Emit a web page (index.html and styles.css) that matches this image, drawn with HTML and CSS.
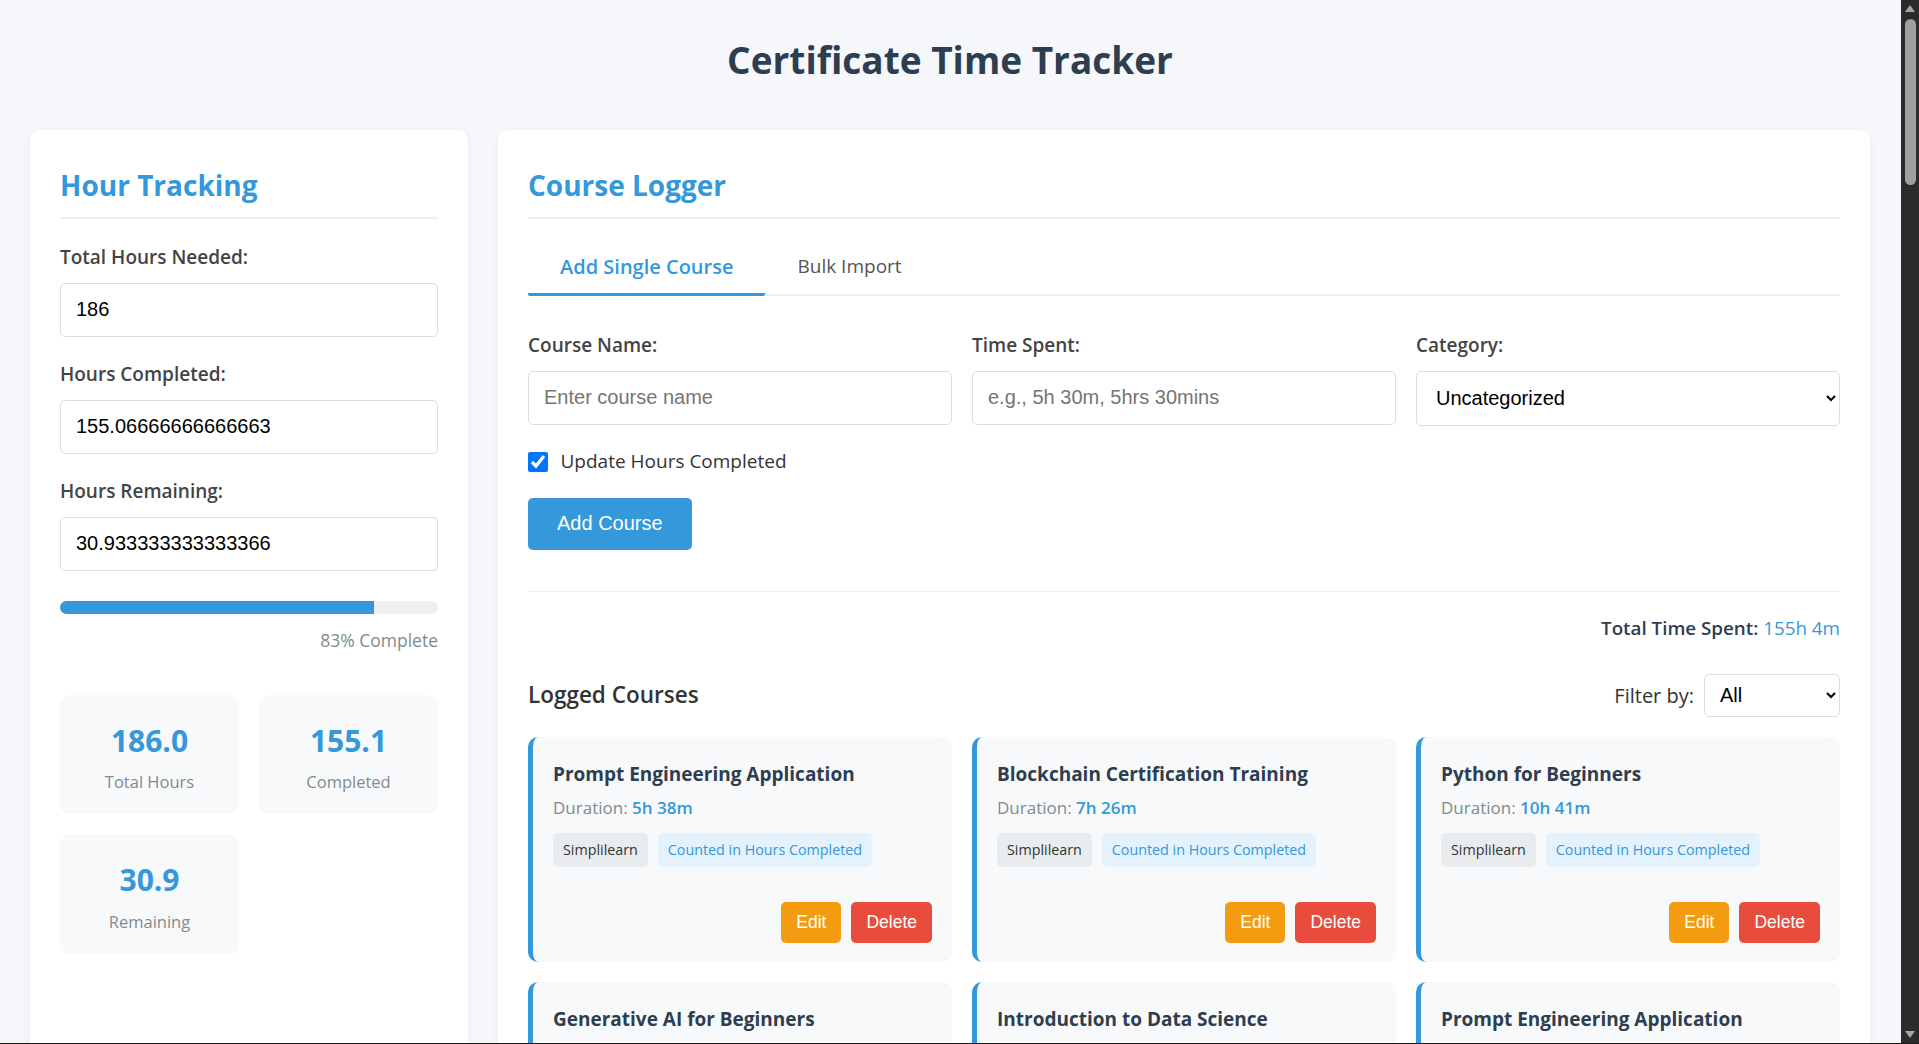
FILE: index.html
```html
<!DOCTYPE html>
<html lang="en">
<head>
<meta charset="utf-8">
<title>Certificate Time Tracker</title>
<link rel="stylesheet" href="styles.css">
</head>
<body>
<div class="viewport">
  <div class="page">
    <header class="app-header">
      <h1 class="app-title">Certificate Time Tracker</h1>
    </header>
    <main class="layout">
      <section class="panel">
        <h2 class="panel-title">Hour Tracking</h2>
        <div class="form-group">
          <label class="field-label">Total Hours Needed:</label>
          <input class="field" type="text" value="186">
        </div>
        <div class="form-group">
          <label class="field-label">Hours Completed:</label>
          <input class="field" type="text" value="155.06666666666663">
        </div>
        <div class="form-group">
          <label class="field-label">Hours Remaining:</label>
          <input class="field" type="text" value="30.933333333333366">
        </div>
        <div class="progress"><div class="progress-fill" style="width:83%"></div></div>
        <div class="progress-text">83% Complete</div>
        <div class="stats">
          <div class="stat"><div class="stat-value">186.0</div><div class="stat-label">Total Hours</div></div>
          <div class="stat"><div class="stat-value">155.1</div><div class="stat-label">Completed</div></div>
          <div class="stat"><div class="stat-value">30.9</div><div class="stat-label">Remaining</div></div>
        </div>
      </section>

      <section class="panel">
        <h2 class="panel-title">Course Logger</h2>
        <div class="tabs">
          <button class="tab active" type="button">Add Single Course</button>
          <button class="tab" type="button">Bulk Import</button>
        </div>
        <div class="form-row">
          <div class="form-col">
            <label class="field-label">Course Name:</label>
            <input class="field" type="text" placeholder="Enter course name">
          </div>
          <div class="form-col">
            <label class="field-label">Time Spent:</label>
            <input class="field" type="text" placeholder="e.g., 5h 30m, 5hrs 30mins">
          </div>
          <div class="form-col">
            <label class="field-label">Category:</label>
            <select class="field select-field"><option>Uncategorized</option></select>
          </div>
        </div>
        <label class="check-row"><input type="checkbox" checked><span>Update Hours Completed</span></label>
        <button class="btn-primary" type="button">Add Course</button>
        <hr class="divider">
        <div class="total-time"><strong>Total Time Spent:</strong> <span>155h 4m</span></div>
        <div class="list-header">
          <h3 class="list-title">Logged Courses</h3>
          <div class="filter">
            <label class="filter-label">Filter by:</label>
            <select class="filter-select"><option>All</option></select>
          </div>
        </div>
        <div class="course-grid">
          <article class="course-card">
            <h4 class="course-name">Prompt Engineering Application</h4>
            <div class="course-duration">Duration: <b>5h 38m</b></div>
            <div class="tags"><span class="tag">Simplilearn</span><span class="tag tag-counted">Counted in Hours Completed</span></div>
            <div class="card-actions"><button class="btn-sm btn-edit" type="button">Edit</button><button class="btn-sm btn-delete" type="button">Delete</button></div>
          </article>
          <article class="course-card">
            <h4 class="course-name">Blockchain Certification Training</h4>
            <div class="course-duration">Duration: <b>7h 26m</b></div>
            <div class="tags"><span class="tag">Simplilearn</span><span class="tag tag-counted">Counted in Hours Completed</span></div>
            <div class="card-actions"><button class="btn-sm btn-edit" type="button">Edit</button><button class="btn-sm btn-delete" type="button">Delete</button></div>
          </article>
          <article class="course-card">
            <h4 class="course-name">Python for Beginners</h4>
            <div class="course-duration">Duration: <b>10h 41m</b></div>
            <div class="tags"><span class="tag">Simplilearn</span><span class="tag tag-counted">Counted in Hours Completed</span></div>
            <div class="card-actions"><button class="btn-sm btn-edit" type="button">Edit</button><button class="btn-sm btn-delete" type="button">Delete</button></div>
          </article>
          <article class="course-card">
            <h4 class="course-name">Generative AI for Beginners</h4>
            <div class="course-duration">Duration: <b>3h 12m</b></div>
            <div class="tags"><span class="tag">Simplilearn</span><span class="tag tag-counted">Counted in Hours Completed</span></div>
            <div class="card-actions"><button class="btn-sm btn-edit" type="button">Edit</button><button class="btn-sm btn-delete" type="button">Delete</button></div>
          </article>
          <article class="course-card">
            <h4 class="course-name">Introduction to Data Science</h4>
            <div class="course-duration">Duration: <b>4h 5m</b></div>
            <div class="tags"><span class="tag">Simplilearn</span><span class="tag tag-counted">Counted in Hours Completed</span></div>
            <div class="card-actions"><button class="btn-sm btn-edit" type="button">Edit</button><button class="btn-sm btn-delete" type="button">Delete</button></div>
          </article>
          <article class="course-card">
            <h4 class="course-name">Prompt Engineering Application</h4>
            <div class="course-duration">Duration: <b>5h 38m</b></div>
            <div class="tags"><span class="tag">Simplilearn</span><span class="tag tag-counted">Counted in Hours Completed</span></div>
            <div class="card-actions"><button class="btn-sm btn-edit" type="button">Edit</button><button class="btn-sm btn-delete" type="button">Delete</button></div>
          </article>
        </div>
      </section>
    </main>
  </div>
  <div class="scrollbar" aria-hidden="true">
    <div class="sb-arrow"><svg width="10" height="7" viewBox="0 0 10 7"><path d="M5 0L10 7H0z" fill="#a6a6a6"/></svg></div>
    <div class="sb-track"><div class="sb-thumb"></div></div>
    <div class="sb-arrow"><svg width="10" height="7" viewBox="0 0 10 7"><path d="M0 0H10L5 7z" fill="#a6a6a6"/></svg></div>
  </div>
</div>
</body>
</html>
```

FILE: styles.css
```css
* { box-sizing: border-box; }
html, body { margin: 0; height: 100%; }
body {
  font-family: "Open Sans", "Noto Sans", sans-serif;
  background: #f5f7fa;
  color: #333;
  overflow: hidden;
}
.viewport {
  display: flex;
  height: 100vh;
  overflow: hidden;
  border-bottom: 1px solid #1c1c1c;
}
.page {
  flex: 1;
  min-width: 0;
  padding: 0 31px 0 30px;
  overflow: hidden;
}
.app-header { padding-top: 33px; margin-bottom: 43px; }
.app-title {
  margin: 0;
  text-align: center;
  font-size: 37px;
  line-height: 54px;
  font-weight: 700;
  color: #2c3e50;
}
.layout {
  display: grid;
  grid-template-columns: 438px 1fr;
  gap: 30px;
  align-items: stretch;
}
.panel {
  background: #fff;
  border-radius: 10px;
  padding: 30px;
  box-shadow: 0 2px 10px rgba(0, 0, 0, 0.05);
}
.panel-title {
  margin: 5px 0 25px;
  font-size: 28px;
  line-height: 40px;
  font-weight: 700;
  color: #3498db;
  padding-bottom: 12px;
  border-bottom: 2px solid #ecf0f1;
}
.form-group + .form-group { margin-top: 24.5px; }
.field-label {
  display: block;
  font-size: 19px;
  line-height: 27px;
  font-weight: 600;
  color: #444;
  margin-bottom: 11.5px;
}
.field {
  display: block;
  width: 100%;
  height: 54px;
  padding: 0 15px;
  border: 1px solid #ddd;
  border-radius: 5px;
  font-family: "Liberation Sans", Arial, sans-serif;
  font-size: 20px;
  color: #000;
  background: #fff;
}
.field::placeholder { color: #757575; }
.select-field { height: 55px; }
.progress {
  margin-top: 30.5px;
  height: 12.5px;
  background: #ecf0f1;
  border-radius: 7px;
  overflow: hidden;
}
.progress-fill { height: 100%; background: #3498db; }
.progress-text {
  text-align: right;
  font-size: 17.5px;
  line-height: 24px;
  color: #7f8c8d;
  margin-top: 14.7px;
}
.stats {
  display: grid;
  grid-template-columns: 1fr 1fr;
  gap: 20px;
  margin-top: 42.8px;
}
.stat {
  background: #f8f9fa;
  border-radius: 10px;
  padding: 25.9px 10px 20.2px;
  text-align: center;
}
.stat-value { font-size: 30px; line-height: 40px; font-weight: 700; color: #3498db; }
.stat-label { font-size: 16.5px; line-height: 24px; color: #7f8c8d; margin-top: 9.3px; }

.tabs { display: flex; border-bottom: 2px solid #ecf0f1; margin-top: -1px; }
.tab {
  font-family: inherit;
  font-size: 19px;
  line-height: 27px;
  padding: 9.6px 32px 13.4px;
  background: none;
  border: none;
  border-bottom: 3px solid transparent;
  margin-bottom: -2px;
  color: #555;
}
.tab.active { color: #3498db; font-size: 20px; font-weight: 600; border-bottom-color: #3498db; border-radius: 2px; }
.form-row {
  display: grid;
  grid-template-columns: repeat(3, 1fr);
  gap: 20px;
  margin-top: 36.4px;
}
.check-row {
  display: flex;
  align-items: center;
  gap: 12.5px;
  margin-top: 22.4px;
  font-size: 19px;
  line-height: 27px;
  color: #333;
}
.check-row input { width: 20px; height: 20px; margin: 0; }
.btn-primary {
  display: block;
  margin-top: 22.3px;
  height: 52px;
  padding: 0 29px;
  background: #3498db;
  color: #fff;
  border: none;
  border-radius: 5px;
  font-family: "Liberation Sans", Arial, sans-serif;
  font-size: 20px;
}
.divider { border: 0; border-top: 1px solid #ecf0f1; margin: 41px 0 0; }
.total-time { margin-top: 23.4px; text-align: right; font-size: 18.8px; line-height: 27px; }
.total-time strong { font-weight: 600; color: #2c3e50; }
.total-time span { color: #3498db; }
.list-header {
  display: flex;
  justify-content: space-between;
  align-items: center;
  margin-top: 31.6px;
}
.list-title { margin: 0; font-size: 22.5px; line-height: 30px; font-weight: 600; color: #333; }
.filter { display: flex; align-items: center; gap: 10px; font-size: 20px; color: #333; }
.filter-select {
  width: 136px;
  height: 43.4px;
  padding: 0 11px;
  border: 1px solid #ddd;
  border-radius: 5px;
  font-family: "Liberation Sans", Arial, sans-serif;
  font-size: 20px;
  color: #000;
  background: #fff;
}
.course-grid {
  display: grid;
  grid-template-columns: repeat(3, 1fr);
  gap: 20px;
  margin-top: 20.3px;
}
.course-card {
  background: #f8f9fa;
  border-left: 5px solid #3498db;
  border-radius: 10px;
  padding: 23.5px 20px 19.6px;
}
.course-name { margin: 0; font-size: 19px; line-height: 27px; font-weight: 700; color: #2c3e50; }
.course-duration { margin-top: 8.7px; font-size: 17px; line-height: 24px; color: #7f8c8d; }
.course-duration b { color: #3498db; font-weight: 600; }
.tags { display: flex; gap: 10px; margin-top: 12.8px; }
.tag {
  font-size: 14.3px;
  line-height: 20px;
  padding: 6.85px 10px;
  border-radius: 5px;
  background: #e9ecef;
  color: #333;
}
.tag-counted { background: #e3f2fd; color: #3498db; }
.card-actions { display: flex; justify-content: flex-end; gap: 10px; margin-top: 35.3px; }
.btn-sm {
  height: 40.7px;
  padding: 0 15px;
  font-family: "Liberation Sans", Arial, sans-serif;
  font-size: 17.5px;
  color: #fff;
  border: 0;
  border-radius: 5px;
}
.btn-edit { background: #f39c12; }
.btn-delete { background: #e74c3c; }

.scrollbar {
  flex: none;
  width: 18px;
  background: #2b2b2b;
  display: flex;
  flex-direction: column;
  align-items: center;
}
.sb-arrow { height: 17px; width: 100%; display: flex; align-items: center; justify-content: center; }
.sb-track { flex: 1; width: 100%; display: flex; flex-direction: column; align-items: center; }
.sb-thumb { width: 11px; height: 166px; margin-top: 2px; background: #9f9f9f; border-radius: 6px; }
```
